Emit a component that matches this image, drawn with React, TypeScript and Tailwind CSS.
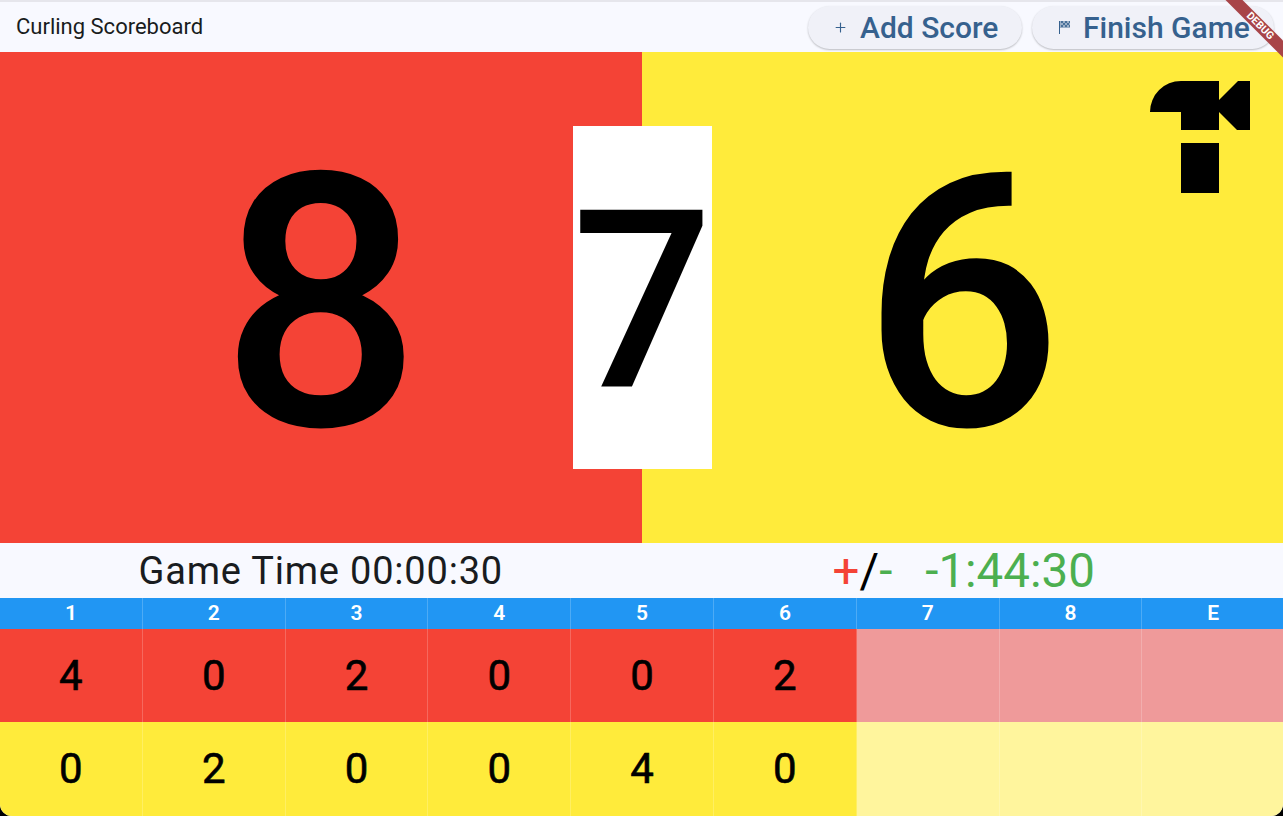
import React from 'react';
import { Plus } from 'lucide-react';

const ends = ['1', '2', '3', '4', '5', '6', '7', '8', 'E'];
const redScores = ['4', '0', '2', '0', '0', '2', '', '', ''];
const yellowScores = ['0', '2', '0', '0', '4', '0', '', '', ''];

const HammerIcon = () => (
  <svg className="absolute left-[507px] top-[28px]" width="102" height="114" viewBox="0 0 102 114">
    <path d="M1 32 A31 31 0 0 1 32 1 H70 V20 L89 1 H101 V50 H88 L70 32 V50 H32 V32 Z" fill="#000" />
    <rect x="32" y="63" width="38" height="50" fill="#000" />
  </svg>
);

const FlagIcon = () => (
  <svg width="12" height="13" viewBox="0 0 12 13" shapeRendering="crispEdges">
    <rect x="0" y="0" width="1.2" height="13" fill="#36618e" />
    <rect x="1.2" y="0" width="10" height="7" fill="#36618e" opacity="0.45" />
    <path d="M2 0h2v2H2zM6 0h2v2H6zM10 0h1v2h-1zM4 2h2v2H4zM8 2h2v2H8zM2 4h2v2H2zM6 4h2v2H6zM10 4h1v2h-1z" fill="#36618e" opacity="0.8" />
  </svg>
);

const ActionButton: React.FC<{ icon: React.ReactNode; label: string; className: string }> = ({ icon, label, className }) => (
  <button
    className={`flex h-[43px] items-center gap-[12px] rounded-full bg-[#f0f1f8] text-[30px] font-medium text-[#36618e] shadow-[0_1px_2px_rgba(0,0,0,0.25)] ${className}`}
  >
    {icon}
    <span className="pt-[1px] leading-none">{label}</span>
  </button>
);

const ScoreRow: React.FC<{ scores: string[]; solid: string; faded: string; height: string }> = ({ scores, solid, faded, height }) => (
  <div className={`grid grid-cols-[repeat(9,142.8px)] ${height}`}>
    {scores.map((score, i) => (
      <div
        key={i}
        className={`flex items-center justify-center border-r border-white/20 text-[42px] font-normal leading-none text-black [-webkit-text-stroke:0.6px_black] ${
          i < 6 ? solid : faded
        }`}
      >
        {score}
      </div>
    ))}
  </div>
);

export default function App() {
  return (
    <div className="h-[816px] w-[1283px] overflow-hidden bg-black font-['Roboto',sans-serif]">
      <div className="relative flex h-full flex-col overflow-hidden rounded-b-[12px] bg-[#f8f9ff]">
        {/* App bar */}
        <header className="flex h-[52px] shrink-0 items-center justify-between border-t-2 border-[#e6e6ec] pl-[16px] pr-[9px]">
          <h1 className="text-[22px] leading-none text-[#191c20]">Curling Scoreboard</h1>
          <div className="flex gap-[10px]">
            <ActionButton
              icon={<Plus className="h-[15px] w-[15px]" strokeWidth={1.8} />}
              label="Add Score"
              className="w-[214px] pl-[25px]"
            />
            <ActionButton icon={<FlagIcon />} label="Finish Game" className="w-[242px] pl-[27px]" />
          </div>
        </header>

        {/* Big scores */}
        <section className="relative flex h-[491px] shrink-0">
          <div className="flex w-1/2 items-center justify-center bg-[#f44336] pt-[12px] text-[354px] font-medium leading-none text-black">
            8
          </div>
          <div className="relative flex w-1/2 items-center justify-center bg-[#ffeb3b] pt-[12px] text-[354px] font-medium leading-none text-black">
            6
            <HammerIcon />
          </div>
          <div className="absolute left-[573px] top-[74px] flex h-[343px] w-[139px] items-center justify-center bg-white pt-[10px] text-[248px] font-medium leading-none text-black">
            7
          </div>
        </section>

        {/* Timers */}
        <section className="flex h-[55px] shrink-0 items-center">
          <div className="w-1/2 text-center text-[38px] leading-none tracking-[0.8px] text-[#191c20]">Game Time 00:00:30</div>
          <div className="flex w-1/2 items-center justify-center pl-[3px] pt-[3px] text-[47.5px] leading-none">
            <span className="text-[#f44336]">+</span>
            <span className="text-black">/</span>
            <span className="text-[#4caf50]">-</span>
            <span className="ml-[33px] text-[#4caf50]">-1:44:30</span>
          </div>
        </section>

        {/* Ends table */}
        <section className="flex-1">
          <div className="grid h-[31px] grid-cols-[repeat(9,142.8px)] bg-[#2196f3]">
            {ends.map((end) => (
              <div
                key={end}
                className="flex items-center justify-center border-r border-white/20 text-[21px] font-semibold leading-none text-white"
              >
                {end}
              </div>
            ))}
          </div>
          <ScoreRow scores={redScores} solid="bg-[#f44336]" faded="bg-[#ef9a9a]" height="h-[93px]" />
          <ScoreRow scores={yellowScores} solid="bg-[#ffeb3b]" faded="bg-[#fff59d]" height="h-[94px]" />
        </section>

        {/* Debug ribbon */}
        <div className="absolute right-[-27px] top-[20px] flex h-[12px] w-[100px] rotate-45 items-center justify-center bg-[#a84448] text-[10.5px] font-bold leading-none text-white">
          DEBUG
        </div>
      </div>
    </div>
  );
}
